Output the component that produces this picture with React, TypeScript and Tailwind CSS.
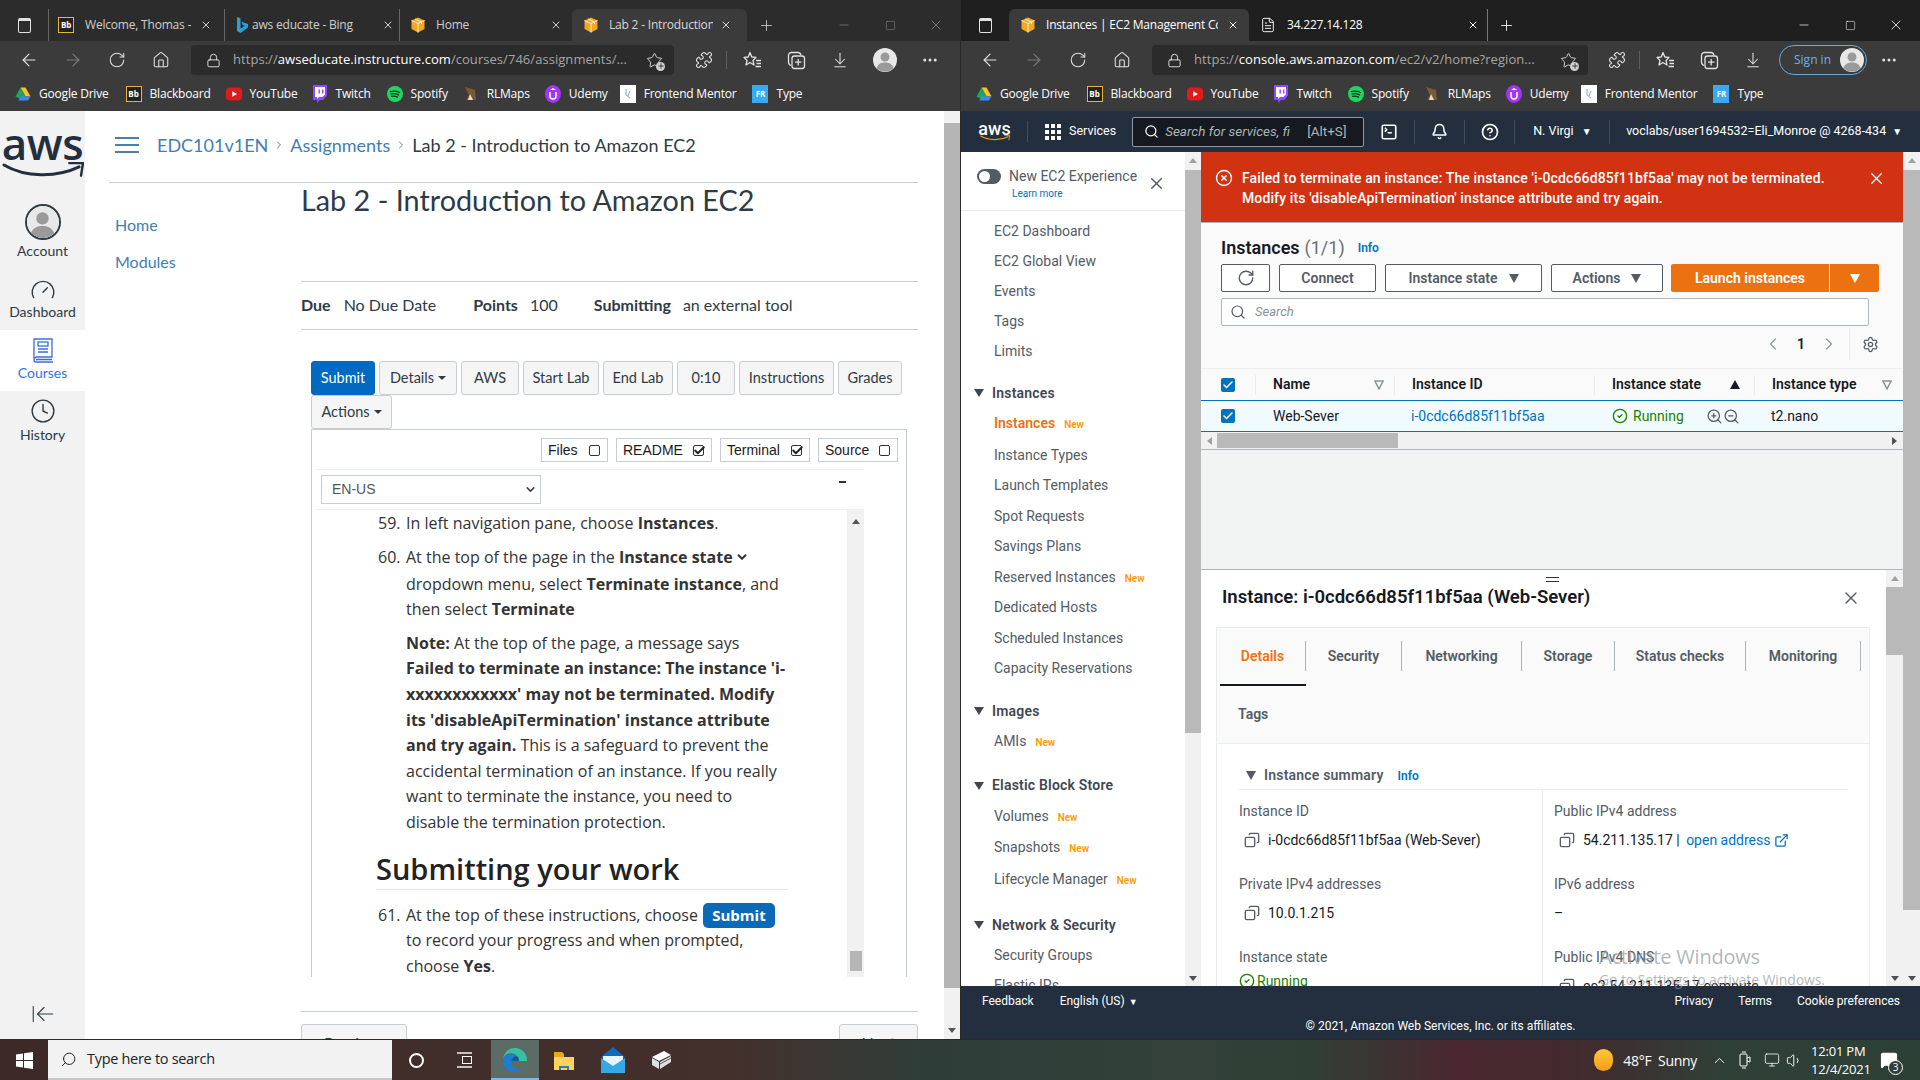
import React from 'react';
import {
    ArrowLeft, ArrowRight, RotateCw, Home, Lock, Puzzle, ArrowDownToLine, MoreHorizontal, Minus, Square, X, Plus,
    ChevronDown, ChevronLeft, ChevronRight, Search, SquareTerminal, Bell, CircleHelp, Settings,
    ZoomIn, ZoomOut, Copy, ExternalLink, CheckCircle2, XCircle, Check, Clock, Gauge, ArrowLeftToLine,
    Star, FileText, Volume1, Monitor, ChevronUp, MessageSquare,
} from 'lucide-react';

const sans = "[font-family:'Open_Sans',sans-serif]";
const canvas = "[font-family:'Lato',sans-serif]";
const ember = "[font-family:'Roboto',sans-serif]";
const arial = "[font-family:'Liberation_Sans',sans-serif]";

const Cube = ({ size = 16 }: { size?: number }) => (
    <svg width={size} height={size} viewBox="0 0 16 16" className="shrink-0">
        <path d="M8 .5 14.5 3.5V12L8 15.5 1.5 12V3.5Z" fill="#f5a623" />
        <path d="M1.5 3.5 8 6.5 14.5 3.5M8 6.5V15.5M5 2 11.5 5V7" fill="none" stroke="#fff3d6" strokeWidth="1" />
    </svg>
);

const BbIcon = () => (
    <div className="w-4 h-4 shrink-0 bg-[#222] border border-[#e8b33f] text-white text-[8px] font-bold leading-[14px] text-center">Bb</div>
);

const BingIcon = () => (
    <svg width="16" height="18" viewBox="0 0 16 18" className="shrink-0">
        <path d="M3 1l3.5 1.2v10.2l4.3-2.5-2.1-1-1.3-3.2 6.6 2.3v3.4L6.6 17 3 15Z" fill="#2c9fd8" />
    </svg>
);

const DriveIcon = () => (
    <svg width="16" height="16" viewBox="0 0 16 16" className="shrink-0">
        <path d="M5.5 1.5h5L15.5 10.5h-5Z" fill="#f7c325" />
        <path d="M5.5 1.5 10.5 10.5 8 14.5 0.5 10.5Z" fill="#1ea362" />
        <path d="M3.2 14.5 5.6 10.5h9.9l-2.6 4Z" fill="#4285f4" />
    </svg>
);

const YoutubeIcon = () => (
    <svg width="16" height="16" viewBox="0 0 16 16" className="shrink-0">
        <rect x="0" y="1.5" width="16" height="13" rx="4" fill="#e01b1b" />
        <path d="M6.2 5.2 11 8l-4.8 2.8Z" fill="#fff" />
    </svg>
);

const TwitchIcon = () => (
    <svg width="15" height="18" viewBox="0 0 15 18" className="shrink-0">
        <path d="M1 0h14v10.5L11 15H8l-3 3v-3H1Z" fill="#9146ff" />
        <path d="M3 2h10v7.5L10.5 12H7l-2 2v-2H3Z" fill="#fff" />
        <path d="M6.5 4.5h1.4v4H6.5ZM10 4.5h1.4v4H10Z" fill="#9146ff" />
    </svg>
);

const SpotifyIcon = () => (
    <svg width="16" height="16" viewBox="0 0 16 16" className="shrink-0">
        <circle cx="8" cy="8" r="8" fill="#1ed760" />
        <path d="M3.5 5.6c3-.8 6-.6 9 .9M4 8c2.5-.6 5-.4 7.6.9M4.5 10.3c2-.5 4-.3 6 .8" fill="none" stroke="#14301e" strokeWidth="1.2" strokeLinecap="round" />
    </svg>
);

const RlIcon = () => (
    <svg width="16" height="16" viewBox="0 0 16 16" className="shrink-0">
        <path d="M2 1 12 4 13 14H3L6 9Z" fill="#7a5a35" />
        <path d="M7 8 10 14H5Z" fill="#e7dcc4" />
    </svg>
);

const UdemyIcon = () => (
    <svg width="16" height="18" viewBox="0 0 16 18" className="shrink-0">
        <ellipse cx="8" cy="9" rx="8" ry="9" fill="#a435f0" />
        <path d="M5 7v4a3 3 0 0 0 6 0V7" fill="none" stroke="#fff" strokeWidth="1.5" />
        <path d="M8 3 11 5H5Z" fill="#fff" />
    </svg>
);

const MentorIcon = () => (
    <div className="w-4 h-[18px] shrink-0 bg-white flex items-center justify-center">
        <svg width="10" height="12" viewBox="0 0 10 12"><path d="M3 1v6l4 3M7 3 5 8" fill="none" stroke="#8aa2d8" strokeWidth="1" /></svg>
    </div>
);

const TypeIcon = () => (
    <div className="w-4 h-[18px] shrink-0 bg-[#38a9f5] text-white text-[8px] font-bold leading-[18px] text-center">FR</div>
);

const bookmarks: [React.ReactNode, string, number][] = [
    [<DriveIcon />, 'Google Drive', 0],
    [<BbIcon />, 'Blackboard', 17],
    [<YoutubeIcon />, 'YouTube', 15],
    [<TwitchIcon />, 'Twitch', 15],
    [<SpotifyIcon />, 'Spotify', 16],
    [<RlIcon />, 'RLMaps', 15],
    [<UdemyIcon />, 'Udemy', 15],
    [<MentorIcon />, 'Frontend Mentor', 12],
    [<TypeIcon />, 'Type', 16],
];

const BookmarkBar = () => (
    <div className={`h-[29px] bg-[#3b3b3b] flex items-center pl-[15px] pb-[6px] text-[12px] text-white ${sans}`}>
        {bookmarks.map(([icon, label, gap]) => (
            <div key={label} className="flex items-center gap-2 whitespace-nowrap" style={{ marginLeft: gap }}>
                {icon}
                <span className="tracking-[-0.2px]">{label}</span>
            </div>
        ))}
    </div>
);

const ToolBtn = ({ children, dim }: { children: React.ReactNode; dim?: boolean }) => (
    <div className={`w-[44px] h-[30px] flex items-center justify-center shrink-0 ${dim ? 'text-[#7c7c7c]' : 'text-[#e2e2e2]'}`}>{children}</div>
);

const AddressBar = ({ host, path, width }: { host: string; path: string; width: string }) => (
    <div className={`ml-2 h-[30px] rounded bg-[#2b2b2b] flex items-center pl-[15px] pr-[11px] text-[13px] ${width} ${sans}`}>
        <Lock size={15} strokeWidth={1.5} className="text-[#e2e2e2] shrink-0" />
        <span className="ml-[12px] text-[#a6a6a6] whitespace-nowrap tracking-[0.05px] flex-1">https://<span className="text-white">{host}</span>{path}</span>
        <div className="relative shrink-0 text-[#d0d0d0]">
            <Star size={17} strokeWidth={1.4} />
            <div className="absolute -right-[2px] -bottom-[2px] w-[9px] h-[9px] rounded-full bg-[#d0d0d0] text-[#2b2b2b] flex items-center justify-center"><Plus size={8} strokeWidth={2.5} /></div>
        </div>
    </div>
);

const Avatar = ({ size }: { size: number }) => (
    <svg width={size} height={size} viewBox="0 0 24 24" className="shrink-0">
        <circle cx="12" cy="12" r="12" fill="#e8e8e8" />
        <circle cx="12" cy="9" r="4.5" fill="#9a9a9a" />
        <path d="M3.5 20c1.5-4.5 5-5.5 8.5-5.5s7 1 8.5 5.5a12 12 0 0 1-17 0Z" fill="#9a9a9a" />
    </svg>
);

const ToolIcons = () => (
    <>
        <div className="w-[1px] h-[18px] bg-[#5e5e5e] mr-[3px]"></div>
        <ToolBtn>
            <svg width="19" height="19" viewBox="0 0 19 19" fill="none" stroke="currentColor" strokeWidth="1.3" strokeLinejoin="round">
                <path d="M7 1.5 8.8 6 13 6.4 10 9.5 11 14 7 11.5 3 14 4 9.5 1 6.4 5.2 6Z" />
                <path d="M13 9.5h5M13.5 12.5h4.5M12.5 15.5h5.5" />
            </svg>
        </ToolBtn>
        <ToolBtn>
            <svg width="19" height="19" viewBox="0 0 19 19" fill="none" stroke="currentColor" strokeWidth="1.3">
                <path d="M4 14.5C2.5 14 1.5 13 1.5 11V4.5C1.5 2.5 3 1.5 4.5 1.5H11c1.5 0 2.5 1 3 2.5" />
                <rect x="5" y="5" width="12.5" height="12.5" rx="2.5" />
                <path d="M11.2 8v6.5M8 11.2h6.5" />
            </svg>
        </ToolBtn>
        <ToolBtn><ArrowDownToLine size={18} strokeWidth={1.4} /></ToolBtn>
    </>
);

const WindowControls = ({ dim }: { dim?: boolean }) => (
    <div className={`ml-auto flex items-center pr-[1px] ${dim ? 'text-[#8a8a8a]' : 'text-white'}`}>
        <div className="w-[46px] flex justify-center"><Minus size={14} strokeWidth={1.2} /></div>
        <div className="w-[46px] flex justify-center"><Square size={11} strokeWidth={1.2} /></div>
        <div className="w-[46px] flex justify-center"><X size={16} strokeWidth={1.2} /></div>
    </div>
);

const TabStripIcon = () => (
    <div className="w-[48px] flex justify-center text-[#e2e2e2]">
        <div className="w-[13px] h-[15px] rounded-[2px] border border-current border-t-[3px]"></div>
    </div>
);

const LeftChrome = () => (
    <>
        <div className={`h-[41px] bg-[#2c2c2c] flex items-end text-[12px] text-[#cfcfcf] tracking-[-0.2px] ${sans}`}>
            <div className="h-[32px] flex items-center"><TabStripIcon /></div>
            <div className="w-[176px] h-[32px] flex items-center pl-[9px] border-l border-[#666]">
                <BbIcon />
                <span className="ml-[11px] w-[106px] whitespace-nowrap overflow-hidden">Welcome, Thomas –</span>
                <X size={12} className="ml-[9px]" />
            </div>
            <div className="w-[175px] h-[32px] flex items-center pl-[9px] border-l border-[#666]">
                <BingIcon />
                <span className="ml-[2px] w-[122px] whitespace-nowrap overflow-hidden">aws educate - Bing</span>
                <X size={12} className="ml-[8px]" />
            </div>
            <div className="w-[173px] h-[32px] flex items-center pl-[10px] border-l border-[#666]">
                <Cube />
                <span className="ml-[10px] w-[114px] text-[#cfcfcf]">Home</span>
                <X size={12} className="ml-[0px]" />
            </div>
            <div className="w-[175px] h-[32px] flex items-center pl-[11px] bg-[#3b3b3b] rounded-t-md text-[#d8d8d8]">
                <Cube />
                <span className="ml-[10px] w-[104px] whitespace-nowrap overflow-hidden">Lab 2 - Introduction</span>
                <X size={12} className="ml-[7px]" />
            </div>
            <div className="h-[32px] flex items-center ml-[11px] text-[#cfcfcf]"><Plus size={17} strokeWidth={1.2} /></div>
            <div className="h-[32px] flex flex-1 items-center"><WindowControls dim /></div>
        </div>
        <div className="h-[41px] bg-[#3b3b3b] flex items-center pl-[7px] pb-[3px]">
            <ToolBtn><ArrowLeft size={20} strokeWidth={1.4} /></ToolBtn>
            <ToolBtn dim><ArrowRight size={20} strokeWidth={1.4} /></ToolBtn>
            <ToolBtn><RotateCw size={18} strokeWidth={1.4} /></ToolBtn>
            <ToolBtn><Home size={18} strokeWidth={1.4} /></ToolBtn>
            <AddressBar host="awseducate.instructure.com" path="/courses/746/assignments/..." width="w-[483px]" />
            <div className="ml-2 flex items-center">
                <ToolBtn><Puzzle size={18} strokeWidth={1.5} /></ToolBtn>
                <ToolIcons />
                <div className="w-[46px] flex justify-center"><Avatar size={24} /></div>
                <ToolBtn><MoreHorizontal size={18} /></ToolBtn>
            </div>
        </div>
        <BookmarkBar />
    </>
);

const RightChrome = () => (
    <>
        <div className={`h-[41px] bg-[#1f1f1f] flex items-end text-[12px] text-white tracking-[-0.2px] ${sans}`}>
            <div className="h-[32px] flex items-center"><TabStripIcon /></div>
            <div className="w-[240px] h-[32px] flex items-center pl-[11px] bg-[#3b3b3b] rounded-t-md">
                <Cube />
                <span className="ml-[10px] w-[172px] whitespace-nowrap overflow-hidden">Instances | EC2 Management Con</span>
                <X size={12} className="ml-[9px]" />
            </div>
            <div className="w-[239px] h-[32px] flex items-center pl-[11px] border-r border-[#777]">
                <FileText size={16} strokeWidth={1.4} />
                <span className="ml-[11px] w-[180px]">34.227.14.128</span>
                <X size={12} className="ml-[0px]" />
            </div>
            <div className="h-[32px] flex items-center ml-[10px]"><Plus size={17} strokeWidth={1.2} /></div>
            <div className="h-[32px] flex flex-1 items-center"><WindowControls /></div>
        </div>
        <div className="h-[41px] bg-[#3b3b3b] flex items-center pl-[7px] pb-[3px]">
            <ToolBtn><ArrowLeft size={20} strokeWidth={1.4} /></ToolBtn>
            <ToolBtn dim><ArrowRight size={20} strokeWidth={1.4} /></ToolBtn>
            <ToolBtn><RotateCw size={18} strokeWidth={1.4} /></ToolBtn>
            <ToolBtn><Home size={18} strokeWidth={1.4} /></ToolBtn>
            <AddressBar host="console.aws.amazon.com" path="/ec2/v2/home?region..." width="w-[436px]" />
            <div className="ml-[7px] flex items-center">
                <ToolBtn><Puzzle size={18} strokeWidth={1.5} /></ToolBtn>
                <ToolIcons />
                <div className={`ml-1 w-[88px] h-[30px] rounded-full border border-[#6aa9d8] flex items-center justify-between pl-[14px] pr-[2px] text-[12px] text-[#6cb0e6] ${sans}`}>
                    Sign in<Avatar size={24} />
                </div>
                <ToolBtn><MoreHorizontal size={18} /></ToolBtn>
            </div>
        </div>
        <BookmarkBar />
    </>
);

const AwsSmile = ({ width }: { width: number }) => (
    <svg width={width} viewBox="0 0 84 20" className="block">
        <path d="M2 3C24 16 56 16 79 5" fill="none" stroke="currentColor" strokeWidth="3" strokeLinecap="round" />
        <path d="M69 1 83 1 81 14" fill="none" stroke="currentColor" strokeWidth="2.5" strokeLinecap="round" strokeLinejoin="round" />
    </svg>
);

const CanvasSidebar = () => (
    <aside className={`w-[85px] shrink-0 bg-[#f2f2f2] flex flex-col items-center text-[14px] text-[#2d3b45] ${canvas}`}>
        <div className="h-[76px] w-full flex flex-col items-center pt-[16px]">
            <span className={`text-[44px] leading-[32px] font-semibold tracking-[-0.5px] text-[#232f3e] ${sans}`}>aws</span>
            <div className="text-[#232f3e] mt-[3px]"><AwsSmile width={82} /></div>
        </div>
        <div className="h-[70px] w-full flex flex-col items-center pt-[17px]">
            <div className="w-[36px] h-[36px] shrink-0 rounded-full border-2 border-[#2d3b45] overflow-hidden flex items-center justify-center"><Avatar size={33} /></div>
            <span className="mt-[1px] leading-[20px] shrink-0">Account</span>
        </div>
        <div className="h-[73px] w-full flex flex-col items-center pt-[20px] pb-[4px]">
            <Gauge size={26} strokeWidth={1.3} />
            <span className="-mt-[1px] leading-[20px] text-[14px]">Dashboard</span>
        </div>
        <div className="h-[61px] w-full bg-white flex flex-col items-center pt-[7px] text-[#3b6fe0]">
            <svg width="22" height="26" viewBox="0 0 22 26" fill="none" stroke="currentColor" strokeWidth="1.3">
                <path d="M2 2h18v18H5a3 3 0 0 0-3 3Zm0 21a2 2 0 0 0 2 2h17M4 22.5h16" />
                <rect x="6" y="5" width="10" height="4" />
                <path d="M6 12h10M6 15h10" />
            </svg>
            <span className="leading-[20px]">Courses</span>
        </div>
        <div className="flex-1 w-full flex flex-col items-center pt-[7px]">
            <Clock size={26} strokeWidth={1.3} />
            <span className="leading-[20px] mt-[1px]">History</span>
            <div className="mt-auto mb-[12px] text-[#2d3b45]"><ArrowLeftToLine size={26} strokeWidth={1} /></div>
        </div>
    </aside>
);

const LabButton = ({ label, width, caret, primary }: { label: string; width: string; caret?: boolean; primary?: boolean }) => (
    <div className={`h-[34px] ${width} rounded-[3px] border flex items-center justify-center text-[14.5px] ${primary ? 'bg-[#0069c2] border-[#0069c2] text-white' : 'bg-[#f5f5f5] border-[#c7cdd1] text-[#2d3b45]'}`}>
        {label}
        {caret && <span className="ml-[4px] w-0 h-0 border-x-[4px] border-x-transparent border-t-[4px] border-t-[#2d3b45]"></span>}
    </div>
);

const ToggleBox = ({ label, width, checked }: { label: string; width: string; checked?: boolean }) => (
    <div className={`h-[24px] ${width} border border-[#c7cdd1] flex items-center justify-between pl-[6px] pr-[7px] text-[14px] text-[#1a1a1a] ${arial}`}>
        <span>{label}</span>
        <div className="relative w-[11px] h-[11px] rounded-[2px] border border-[#333]">
            {checked && <Check size={13} strokeWidth={3.5} className="absolute -top-[2px] -left-[1px] text-[#222]" />}
        </div>
    </div>
);

const LabContent = () => (
    <div className={`flex-1 overflow-hidden pl-[62px] pt-[1px] text-[16px] leading-[25.6px] text-[#333] whitespace-nowrap ${sans}`}>
        <div className="flex">
            <span className="w-[28px]">59.</span>
            <span>In left navigation pane, choose <b>Instances</b>.</span>
        </div>
        <div className="flex mt-[8px]">
            <span className="w-[28px]">60.</span>
            <div>
                <div className="flex items-center">At the top of the page in the&nbsp;<b>Instance state</b><ChevronDown size={14} strokeWidth={3.5} className="ml-[2px]" /></div>
                <div className="mt-[1.5px]">dropdown menu, select <b>Terminate instance</b>, and</div>
                <div>then select <b>Terminate</b></div>
                <div className="mt-[8px]">
                    <b>Note:</b> At the top of the page, a message says<br />
                    <b>Failed to terminate an instance: The instance 'i-</b><br />
                    <b>xxxxxxxxxxxx' may not be terminated. Modify</b><br />
                    <b>its 'disableApiTermination' instance attribute</b><br />
                    <b>and try again.</b> This is a safeguard to prevent the<br />
                    accidental termination of an instance. If you really<br />
                    want to terminate the instance, you need to<br />
                    disable the termination protection.
                </div>
            </div>
        </div>
        <div className="-ml-[2px] w-[412px] mt-[15px] pb-[2px] border-b border-[#e5e5e5] text-[29px] leading-[36px] font-semibold text-[#222]">Submitting your work</div>
        <div className="flex mt-[13px]">
            <span className="w-[28px]">61.</span>
            <div>
                <div className="flex items-center">At the top of these instructions, choose <span className="ml-[5px] h-[25px] w-[72px] rounded-[5px] bg-[#0a6ab8] text-white text-[15px] font-bold flex items-center justify-center">Submit</span></div>
                <div>to record your progress and when prompted,</div>
                <div>choose <b>Yes</b>.</div>
            </div>
        </div>
    </div>
);

const LabFrame = () => (
    <div className="ml-[10px] w-[596px] h-[548px] border-x border-t border-[#c7cdd1] flex flex-col">
        <div className="h-[39px] w-full flex justify-end gap-2 pt-[8px] pr-[8px]">
            <ToggleBox label="Files" width="w-[67px]" />
            <ToggleBox label="README" width="w-[96px]" checked />
            <ToggleBox label="Terminal" width="w-[90px]" checked />
            <ToggleBox label="Source" width="w-[80px]" />
        </div>
        <div className="ml-[4px] w-[548px] h-[41px] border-y border-[#eee] flex items-center justify-between pl-[5px]">
            <div className={`w-[220px] h-[29px] border border-[#c7cdd1] flex items-center justify-between pl-[10px] pr-[3px] text-[14px] text-[#555] ${arial}`}>
                EN-US
                <ChevronDown size={13} strokeWidth={3} className="text-[#444]" />
            </div>
            <div className="w-[7px] h-[2px] bg-[#333] mb-[16px] mr-[18px]"></div>
        </div>
        <div className="ml-[4px] w-[548px] flex-1 flex overflow-hidden">
            <LabContent />
            <div className="w-[17px] shrink-0 bg-[#f1f1f1] flex flex-col items-center pt-[9px]">
                <div className="w-0 h-0 border-x-[4px] border-x-transparent border-b-[5px] border-b-[#555]"></div>
                <div className="w-[12px] h-[20px] bg-[#b5b5b5] mt-auto mb-[6px]"></div>
            </div>
        </div>
    </div>
);

const LeftPage = () => (
    <div className={`flex-1 min-h-0 flex bg-white overflow-hidden ${canvas}`}>
        <CanvasSidebar />
        <main className="w-[859px] pl-[24px] overflow-hidden text-[#2d3b45]">
            <div className="w-[809px] h-[72px] border-b border-[#c7cdd1] flex items-center pb-[3px]">
                <div className="w-[24px] h-[16px] ml-[6px] border-y-2 border-[#4a7fb0] flex items-center"><div className="w-full h-[2px] bg-[#4a7fb0]"></div></div>
                <div className="ml-[18px] text-[18px] flex items-center gap-[5px] whitespace-nowrap">
                    <span className="text-[#3f7eb3]">EDC101v1EN</span>
                    <ChevronRight size={12} className="text-[#777]" />
                    <span className="text-[#3f7eb3]">Assignments</span>
                    <ChevronRight size={12} className="text-[#777]" />
                    <span>Lab 2 - Introduction to Amazon EC2</span>
                </div>
            </div>
            <div className="flex">
                <nav className="w-[192px] shrink-0 pl-[6px] pt-[30px] text-[16px] text-[#3f7eb3]">
                    <div className="h-[37px] leading-[24px]">Home</div>
                    <div className="leading-[24px]">Modules</div>
                </nav>
                <div className="w-[617px]">
                    <div className="h-[99px] border-b border-[#c7cdd1]">
                        <h1 className="text-[28.8px] leading-[34px] whitespace-nowrap">Lab 2 - Introduction to Amazon EC2</h1>
                    </div>
                    <div className="h-[48px] border-b border-[#c7cdd1] flex items-center pb-[1px] text-[16px] whitespace-nowrap">
                        <b>Due</b><span className="ml-[13px]">No Due Date</span>
                        <b className="ml-[37px]">Points</b><span className="ml-[12px]">100</span>
                        <b className="ml-[36px]">Submitting</b><span className="ml-[12px]">an external tool</span>
                    </div>
                    <div className="mt-[31px] pl-[10px] flex gap-[4px]">
                        <LabButton label="Submit" width="w-[64px]" primary />
                        <LabButton label="Details" width="w-[78px]" caret />
                        <LabButton label="AWS" width="w-[58px]" />
                        <LabButton label="Start Lab" width="w-[76px]" />
                        <LabButton label="End Lab" width="w-[70px]" />
                        <LabButton label="0:10" width="w-[58px]" />
                        <LabButton label="Instructions" width="w-[95px]" />
                        <LabButton label="Grades" width="w-[64px]" />
                    </div>
                    <div className="pl-[10px]"><LabButton label="Actions" width="w-[81px]" caret /></div>
                    <LabFrame />
                    <div className="mt-[34px] border-t border-[#c7cdd1] pt-[12px] flex justify-between text-[16px]">
                        <div className="w-[106px] h-[38px] bg-[#f5f5f5] border border-[#c7cdd1] rounded-[3px] flex items-center justify-center">Previous</div>
                        <div className="w-[79px] h-[38px] bg-[#f5f5f5] border border-[#c7cdd1] rounded-[3px] flex items-center justify-center">Next</div>
                    </div>
                </div>
            </div>
        </main>
        <div className="w-[16px] shrink-0 bg-[#f1f1f1] flex flex-col">
            <div className="h-[12px]"></div>
            <div className="h-[865px] bg-[#b5b5b5]"></div>
            <div className="mt-auto h-[17px] flex items-center justify-center"><div className="w-0 h-0 border-x-[4px] border-x-transparent border-t-[5px] border-t-[#555]"></div></div>
        </div>
    </div>
);

const GridIcon = () => (
    <svg width="16" height="16" viewBox="0 0 16 16" fill="#fff" className="ml-[17px]">
        {[0, 6, 12].map(y => [0, 6, 12].map(x => <rect key={`${x}-${y}`} x={x} y={y} width="4" height="4" />))}
    </svg>
);

const AwsNav = () => (
    <div className={`h-[41px] bg-[#232f3e] flex items-center text-white text-[12.5px] whitespace-nowrap ${ember}`}>
        <div className="w-[67px] flex flex-col items-center pl-[1px] border-r border-[#414d5c]">
            <span className="text-[18px] leading-[15px] font-medium">aws</span>
            <div className="text-[#ff9900] -mt-[1px]"><AwsSmile width={30} /></div>
        </div>
        <GridIcon />
        <span className="ml-[8px]">Services</span>
        <div className="ml-[16px] w-[232px] h-[30px] border border-[#8d99a8] rounded-[2px] bg-[#16191f] flex items-center pl-[11px] text-[13.5px] text-[#aab7b8]">
            <Search size={15} strokeWidth={2} className="text-white" />
            <span className="ml-[6px] italic w-[128px] overflow-hidden">Search for services, fi</span>
            <span className="ml-[14px]">[Alt+S]</span>
        </div>
        <div className="w-[50px] flex justify-center"><SquareTerminal size={18} strokeWidth={2.2} /></div>
        <div className="w-[50px] h-[24px] flex items-center justify-center border-l border-[#414d5c]"><Bell size={17} strokeWidth={2.2} /></div>
        <div className="w-[50px] h-[24px] flex items-center justify-center border-l border-[#414d5c]"><CircleHelp size={18} strokeWidth={2.2} /></div>
        <div className="w-[95px] h-[24px] flex items-center pl-[18px] border-l border-[#414d5c]">N. Virgi<span className="ml-[8px] text-[10px]">▼</span></div>
        <div className="h-[24px] flex items-center pl-[16px] border-l border-[#414d5c]">voclabs/user1694532=Eli_Monroe @ 4268-434<span className="ml-[6px] text-[10px]">▼</span></div>
    </div>
);

type SideItem = { label: string; isNew?: boolean; active?: boolean; tall?: boolean };

const SideLink = ({ label, isNew, active, tall }: SideItem) => (
    <div className={`${tall ? 'h-[31.5px]' : 'h-[30.5px]'} flex items-center pl-[33px] whitespace-nowrap ${active ? 'text-[#ec7211] font-semibold' : 'text-[#545b64]'}`}>
        {label}
        {isNew && <span className="ml-[9px] mt-[2px] text-[10px] font-semibold text-[#ff9900]">New</span>}
    </div>
);

const SideHeading = ({ label, margin }: { label: string; margin: string }) => (
    <div className={`h-[30px] flex items-center pl-[13px] font-semibold tracking-[0.2px] text-[#414750] ${margin}`}>
        <span className="w-0 h-0 border-x-[5px] border-x-transparent border-t-[8px] border-t-[#414750] mr-[8px]"></span>
        {label}
    </div>
);

const AwsSidebar = () => (
    <div className="w-[224px] shrink-0 bg-white overflow-hidden text-[14px]">
        <div className="h-[59px] border-b border-[#eaeded] flex pl-[16px] pt-[17px]">
            <div className="w-[24px] h-[15px] rounded-full bg-[#545b64] pl-[2px] flex items-center"><div className="w-[11px] h-[11px] rounded-full bg-white"></div></div>
            <div className="ml-[8px]">
                <div className="text-[#545b64] leading-[15px] whitespace-nowrap">New EC2 Experience</div>
                <div className="ml-[3px] mt-[3px] text-[10px] leading-[13px] text-[#0073bb]">Learn more</div>
            </div>
            <X size={19} strokeWidth={1.8} className="ml-[10px] mt-[5px] text-[#545b64]" />
        </div>
        <div className="pt-[5px]">
            {['EC2 Dashboard', 'EC2 Global View', 'Events', 'Tags', 'Limits'].map(label => (
                <div key={label} className="h-[30px] flex items-center pl-[33px] text-[#545b64]">{label}</div>
            ))}
        </div>
        <SideHeading label="Instances" margin="mt-[12px]" />
        <div className="mb-[1.5px]"><SideLink label="Instances" isNew active /></div>
        <SideLink label="Instance Types" />
        <SideLink label="Launch Templates" />
        <SideLink label="Spot Requests" />
        <SideLink label="Savings Plans" />
        <SideLink label="Reserved Instances" isNew />
        <SideLink label="Dedicated Hosts" />
        <SideLink label="Scheduled Instances" />
        <SideLink label="Capacity Reservations" />
        <SideHeading label="Images" margin="mt-[12px]" />
        <SideLink label="AMIs" isNew />
        <SideHeading label="Elastic Block Store" margin="mt-[14px]" />
        <SideLink label="Volumes" isNew tall />
        <SideLink label="Snapshots" isNew tall />
        <SideLink label="Lifecycle Manager" isNew tall />
        <SideHeading label="Network & Security" margin="mt-[15px]" />
        <SideLink label="Security Groups" />
        <SideLink label="Elastic IPs" />
    </div>
);

const ScrollV = ({ width, before, thumb }: { width: string; before: string; thumb: string }) => (
    <div className={`${width} shrink-0 bg-[#f1f1f1] flex flex-col items-center relative`}>
        <div className="absolute top-[6px] w-0 h-0 border-x-[4px] border-x-transparent border-b-[5px] border-b-[#a0a0a0]"></div>
        <div className={before}></div>
        <div className={`w-full bg-[#b9b9b9] ${thumb}`}></div>
        <div className="absolute bottom-[5px] w-0 h-0 border-x-[4px] border-x-transparent border-t-[5px] border-t-[#505050]"></div>
    </div>
);

const AwsButton = ({ children, width }: { children: React.ReactNode; width: string }) => (
    <div className={`h-[28px] ${width} border border-[#545b64] rounded-[2px] bg-white flex items-center justify-center font-semibold text-[#545b64]`}>{children}</div>
);

const Caret = ({ color = 'border-t-[#545b64]' }: { color?: string }) => (
    <span className={`block w-0 h-0 border-x-[5px] border-x-transparent border-t-[9px] ${color}`}></span>
);

const Checkbox = () => (
    <div className="w-[14px] h-[14px] rounded-[2px] bg-[#0073bb] flex items-center justify-center">
        <Check size={12} strokeWidth={3} className="text-white" />
    </div>
);

const HeaderCell = ({ width, label, icon, sep = true }: { width: string; label: string; icon?: React.ReactNode; sep?: boolean }) => (
    <div className={`${width} h-[20px] flex items-center justify-between pl-[17px] pr-[10px] font-semibold text-[#16191f] ${sep ? 'border-l border-[#eaeded]' : ''}`}>
        {label}{icon}
    </div>
);

const FilterIcon = () => (
    <svg width="10" height="10" viewBox="0 0 10 10"><path d="M1 1h8L5 9Z" fill="none" stroke="#879596" strokeWidth="1.5" /></svg>
);

const InstancesList = () => (
    <div className="h-[346px] bg-[#f2f3f3] shrink-0">
        <div className="h-[145px] bg-[#fafafa] pl-[20px]">
            <div className="h-[48px] flex items-center text-[#16191f]">
                <span className="text-[18px] font-semibold">Instances</span>
                <span className="ml-[5px] text-[18px] text-[#687078]">(1/1)</span>
                <span className="ml-[13px] mt-[2px] text-[12px] font-semibold text-[#0073bb]">Info</span>
            </div>
            <div className="flex gap-[9px] items-center -mt-[7px]">
                <AwsButton width="w-[49px]"><RotateCw size={18} strokeWidth={1.8} /></AwsButton>
                <AwsButton width="w-[97px]">Connect</AwsButton>
                <AwsButton width="w-[157px]"><span className="mr-[11px]">Instance state</span><Caret /></AwsButton>
                <AwsButton width="w-[112px]"><span className="mr-[11px]">Actions</span><Caret /></AwsButton>
                <div className="flex gap-[1px] ml-[-1px]">
                    <div className="w-[158px] h-[28px] rounded-l-[2px] bg-[#ec7211] text-white font-semibold flex items-center justify-center">Launch instances</div>
                    <div className="w-[49px] h-[28px] rounded-r-[2px] bg-[#ec7211] flex items-center justify-center"><Caret color="border-t-white" /></div>
                </div>
            </div>
            <div className="mt-[6px] w-[648px] h-[28px] rounded-[2px] border border-[#aab7b8] bg-white flex items-center pl-[8px] text-[#879596]">
                <Search size={16} strokeWidth={1.8} className="text-[#545b64]" />
                <span className="ml-[9px] italic text-[13px]">Search</span>
            </div>
            <div className="w-[658px] h-[36px] flex items-center justify-end text-[#545b64]">
                <ChevronLeft size={20} strokeWidth={1.3} className="text-[#879596]" />
                <span className="w-[36px] text-center font-semibold text-[#16191f]">1</span>
                <ChevronRight size={20} strokeWidth={1.3} className="text-[#879596]" />
                <div className="ml-[10px] h-[32px] pl-[12px] border-l border-[#eaeded] flex items-center"><Settings size={17} strokeWidth={1.8} /></div>
            </div>
        </div>
        <div className="h-[32px] bg-[#fafafa] border-t border-[#eaeded] flex items-center">
            <div className="w-[54px] pl-[20px]"><Checkbox /></div>
            <HeaderCell width="w-[139px]" label="Name" icon={<FilterIcon />} />
            <HeaderCell width="w-[200px]" label="Instance ID" />
            <HeaderCell width="w-[160px]" label="Instance state" icon={<span className="w-0 h-0 border-x-[5px] border-x-transparent border-b-[9px] border-b-[#16191f] mr-[4px]"></span>} />
            <HeaderCell width="w-[148px]" label="Instance type" icon={<FilterIcon />} />
        </div>
        <div className="h-[32px] bg-[#f1faff] border-y border-[#0073bb] flex items-center text-[#16191f] whitespace-nowrap">
            <div className="w-[54px] pl-[20px]"><Checkbox /></div>
            <div className="w-[139px] pl-[18px]">Web-Sever</div>
            <div className="w-[201px] pl-[17px] text-[#0073bb]">i-0cdc66d85f11bf5aa</div>
            <div className="w-[159px] pl-[17px] flex items-center">
                <CheckCircle2 size={16} strokeWidth={2} className="text-[#1d8102]" />
                <span className="ml-[5px] text-[#1d8102]">Running</span>
                <ZoomIn size={17} strokeWidth={1.8} className="ml-[22px] text-[#545b64]" />
                <ZoomOut size={17} strokeWidth={1.8} className="ml-[0px] text-[#545b64]" />
            </div>
            <div className="pl-[17px]">t2.nano</div>
        </div>
        <div className="h-[18px] bg-[#f1f1f1] border-b border-[#aab7b8] flex items-center relative">
            <div className="ml-[6px] w-0 h-0 border-y-[4px] border-y-transparent border-r-[5px] border-r-[#a0a0a0]"></div>
            <div className="ml-[5px] w-[181px] h-[15px] bg-[#b9b9b9]"></div>
            <div className="ml-auto mr-[6px] w-0 h-0 border-y-[4px] border-y-transparent border-l-[5px] border-l-[#505050]"></div>
        </div>
    </div>
);

const Tab = ({ label, width, active }: { label: string; width: string; active?: boolean }) => (
    <div className={`${width} h-[58px] pt-[13px] shrink-0 relative`}>
        <div className={`h-[30px] flex items-center justify-center border-r border-[#aab7b8] font-semibold ${active ? 'text-[#ec7211]' : 'text-[#545b64]'}`}>{label}</div>
        {active && <div className="absolute bottom-0 left-0 right-0 h-[2px] bg-[#16191f]"></div>}
    </div>
);

const Field = ({ label, children, height }: { label: string; children: React.ReactNode; height: string }) => (
    <div className={height}>
        <div className="text-[#545b64] leading-[20px]">{label}</div>
        <div className="mt-[9px] leading-[20px] text-[#16191f] flex items-center whitespace-nowrap">{children}</div>
    </div>
);

const CopyIcon = () => <Copy size={16} strokeWidth={2} className="ml-[5px] mr-[8px] text-[#545b64] -scale-x-100" />;

const InstanceDetail = () => (
    <div className="flex-1 min-h-0 flex border-t border-[#aab7b8]">
        <div className="flex-1 bg-white overflow-hidden relative">
            <div className="absolute top-[7px] left-[345px] w-[13px] h-[5px] border-y border-[#333]"></div>
            <div className="h-[57px] flex items-center justify-between pl-[21px] pr-[25px] pb-[1px]">
                <span className="text-[18.5px] font-semibold text-[#16191f]">Instance: i-0cdc66d85f11bf5aa (Web-Sever)</span>
                <X size={20} strokeWidth={1.6} className="text-[#545b64]" />
            </div>
            <div className="ml-[15px] w-[654px] border-x border-t border-[#eaeded] h-[400px]">
                <div className="h-[116px] bg-[#fafafa] border-b border-[#eaeded] pl-[3px]">
                    <div className="flex h-[58px]">
                        <Tab label="Details" width="w-[86px]" active />
                        <Tab label="Security" width="w-[96px]" />
                        <Tab label="Networking" width="w-[120px]" />
                        <Tab label="Storage" width="w-[93px]" />
                        <Tab label="Status checks" width="w-[131px]" />
                        <Tab label="Monitoring" width="w-[115px]" />
                    </div>
                    <div className="pl-[18px] pt-[18px] font-semibold text-[#545b64]">Tags</div>
                </div>
                <div className="h-[46px] mx-[22px] border-b border-[#eaeded] flex items-center pt-[20px] pb-[2px]">
                    <span className="ml-[7px] mr-[8px]"><Caret /></span>
                    <span className="font-semibold tracking-[0.2px] text-[#545b64]">Instance summary</span>
                    <span className="ml-[14px] text-[12px] font-semibold text-[#0073bb]">Info</span>
                </div>
                <div className="mx-[22px] grid grid-cols-[304px_1fr]">
                    <div className="border-r border-[#eaeded] pt-[11px]">
                        <Field label="Instance ID" height="h-[73px]"><CopyIcon />i-0cdc66d85f11bf5aa (Web-Sever)</Field>
                        <Field label="Private IPv4 addresses" height="h-[73px]"><CopyIcon />10.0.1.215</Field>
                        <Field label="Instance state" height="h-[73px]">
                            <CheckCircle2 size={16} strokeWidth={2} className="text-[#1d8102] -mt-[5px]" /><span className="ml-[2px] -mt-[5px] text-[#1d8102]">Running</span>
                        </Field>
                    </div>
                    <div className="pl-[11px] pt-[11px]">
                        <Field label="Public IPv4 address" height="h-[73px]">
                            <CopyIcon />54.211.135.17 |&nbsp;<span className="ml-[3px] text-[#0073bb]">open address</span>
                            <ExternalLink size={15} strokeWidth={2} className="ml-[3px] text-[#0073bb]" />
                        </Field>
                        <Field label="IPv6 address" height="h-[73px]">–</Field>
                        <Field label="Public IPv4 DNS" height="h-[73px]"><CopyIcon />ec2-54-211-135-17.compute</Field>
                    </div>
                </div>
            </div>
        </div>
        <ScrollV width="w-[17px]" before="h-[17px]" thumb="h-[68px]" />
    </div>
);

const AwsBody = () => (
    <div className={`h-[834px] flex text-[14px] overflow-hidden relative ${ember}`}>
        <AwsSidebar />
        <ScrollV width="w-[16px]" before="h-[18px]" thumb="h-[563px]" />
        <div className="w-[702px] shrink-0 flex flex-col bg-[#f2f3f3]">
            <div className="h-[71px] shrink-0 bg-[#d13212] border-b border-[#aab7b8] flex items-start pl-[14px] pt-[16px] text-white font-medium">
                <XCircle size={18} strokeWidth={1.8} className="mt-[1px]" />
                <div className="ml-[9px] leading-[20px] whitespace-nowrap tracking-[0.12px]">
                    Failed to terminate an instance: The instance 'i-0cdc66d85f11bf5aa' may not be terminated.<br />
                    Modify its 'disableApiTermination' instance attribute and try again.
                </div>
                <X size={19} strokeWidth={1.6} className="ml-auto mr-[17px] mt-[1px]" />
            </div>
            <InstancesList />
            <InstanceDetail />
        </div>
        <ScrollV width="w-[17px]" before="h-[18px]" thumb="h-[740px]" />
    </div>
);

const AwsFooter = () => (
    <div className={`h-[53px] bg-[#232f3e] text-[12px] text-white ${ember}`}>
        <div className="h-[30px] flex items-center pl-[21px] pr-[20px]">
            <span>Feedback</span>
            <span className="ml-[26px]">English (US)<span className="ml-[4px] text-[9px]">▼</span></span>
            <span className="ml-auto">Privacy</span>
            <span className="ml-[25px]">Terms</span>
            <span className="ml-[25px]">Cookie preferences</span>
        </div>
        <div className="text-center leading-[18px] pt-[1px]">© 2021, Amazon Web Services, Inc. or its affiliates.</div>
    </div>
);

const EdgeIcon = () => (
    <svg width="26" height="26" viewBox="0 0 26 26">
        <path d="M13 1C6 1 1.5 6.5 1 12.5 2 7.5 7 5.5 11 6.5c4 1 6 4 5.5 7.5h8.5C25.5 7 20 1 13 1Z" fill="#35c1a2" />
        <path d="M1 12.5C.5 20 6.5 25 13 25c3.5 0 6.5-1 8.5-3-6 2-11.5-.5-12-6-.2-3 1.5-6 4.5-7.5C8 5.5 2 8 1 12.5Z" fill="#1a7fd4" />
        <path d="M9.5 14c0-3 3-5 6-4.5 1 .5 1.5 2.5 1 4.5Z" fill="#0e5aa8" />
    </svg>
);

const TaskIcon = ({ children, active, width = 'w-[48px]' }: { children: React.ReactNode; active?: boolean; width?: string }) => (
    <div className={`${width} h-[40px] flex items-center justify-center relative ${active ? 'bg-[#5c6b66]' : ''}`}>
        {children}
        {active && <div className="absolute bottom-0 left-0 right-0 h-[2px] bg-[#76b9ed]"></div>}
    </div>
);

const Taskbar = () => (
    <footer className={`h-[40px] shrink-0 flex items-center text-white bg-[linear-gradient(90deg,#3d2a28_0%,#43302c_38%,#2f3d39_48%,#33413a_62%,#2f3f33_68%,#4a2730_76%,#422a2d_82%,#2f4037_90%,#2d4036_100%)] ${sans}`}>
        <div className="w-[48px] flex justify-center">
            <svg width="17" height="17" viewBox="0 0 17 17"><path d="M0 2.5 7 1.5V8H0ZM8 1.3 17 0V8H8ZM0 9h7v6.5L0 14.5ZM8 9h9v8L8 15.7Z" fill="#fff" /></svg>
        </div>
        <div className="w-[344px] h-[40px] bg-[#f2f2f2] border-b-2 border-[#c8c8c8] flex items-center pl-[12px] text-[14.5px] text-[#222]">
            <Search size={17} strokeWidth={1.4} className="-scale-x-100" />
            <span className="ml-[10px] tracking-[-0.3px]">Type here to search</span>
        </div>
        <TaskIcon><div className="w-[15px] h-[15px] rounded-full border-2 border-white"></div></TaskIcon>
        <TaskIcon>
            <div className="w-[15px] flex flex-col gap-[2px] items-end">
                <div className="w-[15px] h-[2px] border-y border-white/70"></div>
                <div className="w-[10px] h-[8px] border border-white"></div>
                <div className="w-[15px] h-[2px] border-y border-white/70"></div>
            </div>
        </TaskIcon>
        <div className="ml-[3px]"><TaskIcon active><EdgeIcon /></TaskIcon></div>
        <TaskIcon width="w-[50px]">
            <svg width="22" height="22" viewBox="0 0 22 22"><path d="M1 3h8l2 2h0v3H1Z" fill="#e8a824" /><path d="M1 8h20v13H1Z" fill="#ffd35c" /><path d="M6 17h10v4h-2v-2H8v2H6Z" fill="#2a7dcb" /></svg>
        </TaskIcon>
        <TaskIcon>
            <svg width="24" height="26" viewBox="0 0 24 26"><path d="M12 0 24 10 12 18 0 10Z" fill="#0f6cbd" /><path d="M2 9h20v6L12 20 2 15Z" fill="#e8f4ff" /><path d="M0 11 12 19 24 11V26H0Z" fill="#35a8e8" /></svg>
        </TaskIcon>
        <TaskIcon>
            <svg width="22" height="20" viewBox="0 0 22 20"><path d="M2 7 14 1 21 5 9 11Z" fill="#fff" /><path d="M2 8 9 12V19L2 15ZM10 12 21 6V12L10 19Z" fill="#e0e0e0" /><path d="M10 14 21 8" stroke="#555" /></svg>
        </TaskIcon>
        <div className="ml-auto flex items-center whitespace-nowrap">
            <div className="w-[19px] h-[22px] rounded-full bg-[linear-gradient(180deg,#ffc738,#f79a1c)]"></div>
            <span className="ml-[10px] text-[14px] tracking-[-0.3px]">48°F&nbsp; Sunny</span>
            <ChevronUp size={17} strokeWidth={1.3} className="ml-[14px]" />
            <svg width="12" height="18" viewBox="0 0 12 18" className="ml-[11px]"><path d="M2 3h5a1 1 0 0 1 1 1v10a1 1 0 0 1-1 1H2a1 1 0 0 1-1-1V4a1 1 0 0 1 1-1ZM8 7l3-1v5l-3-1M3 17h4M3 1h4" fill="none" stroke="#fff" /></svg>
            <Monitor size={16} strokeWidth={1.2} className="ml-[13px]" />
            <Volume1 size={17} strokeWidth={1.3} className="ml-[6px]" />
            <div className="ml-[8px] w-[50px] text-[13px] leading-[18px] text-center -tracking-[0.2px]">
                <div>12:01 PM</div>
                <div>12/4/2021</div>
            </div>
            <div className="ml-[19px] mr-[22px] relative">
                <MessageSquare size={18} strokeWidth={1.5} fill="#fff" />
                <div className="absolute -right-[5px] -bottom-[6px] w-[15px] h-[15px] rounded-full border border-white bg-[#33413a] text-[10px] leading-[13px] text-center">3</div>
            </div>
        </div>
    </footer>
);

const App: React.FC = () => (
    <div className="relative w-[1920px] h-[1080px] overflow-hidden flex flex-col bg-[#2c2a28]">
        <div className="h-[1040px] flex pb-[1px]">
            <section className="w-[960px] flex flex-col">
                <LeftChrome />
                <LeftPage />
            </section>
            <section className="w-[960px] pl-[1px] flex flex-col">
                <RightChrome />
                <AwsNav />
                <AwsBody />
                <AwsFooter />
            </section>
        </div>
        <Taskbar />
        {/* windows activation watermark sits over the console */}
        <div className={`absolute left-[1599px] top-[944px] text-[#8f9598]/70 pointer-events-none ${sans}`}>
            <div className="text-[20px] leading-[26px] tracking-[-0.2px]">Activate Windows</div>
            <div className="text-[14px] leading-[18px] mt-[1px] tracking-[-0.1px]">Go to Settings to activate Windows.</div>
        </div>
    </div>
);

export default App;
